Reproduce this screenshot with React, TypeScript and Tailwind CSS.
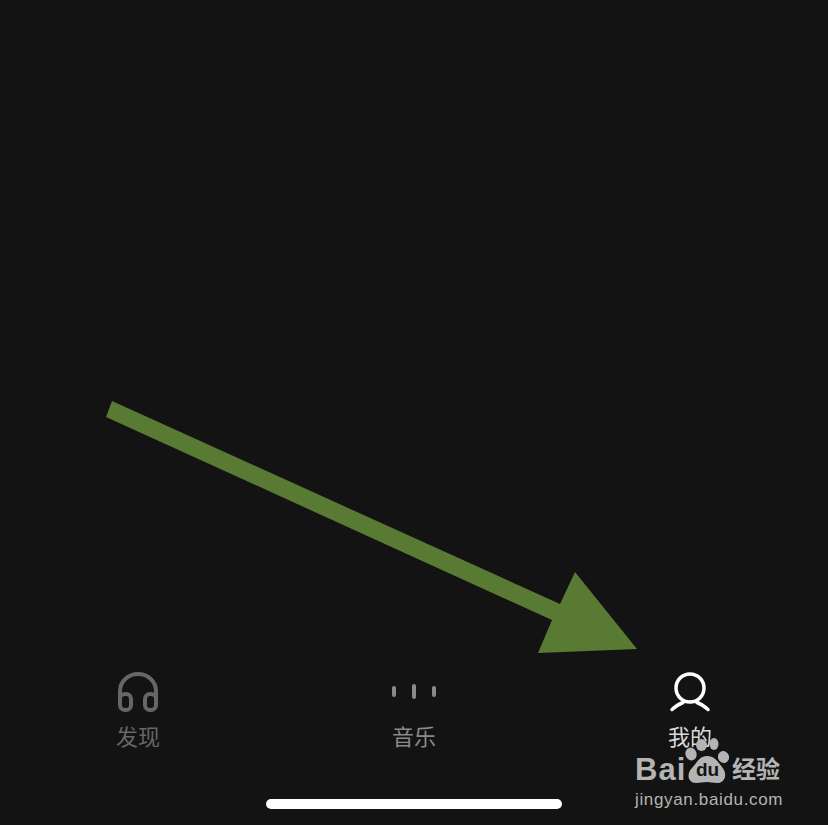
const cjk = { fontFamily: '"Noto Sans CJK SC", "Liberation Sans", sans-serif' };
const latin = { fontFamily: '"Liberation Sans", sans-serif' };

function Headphones() {
  return (
    <svg viewBox="0 0 42 40" className="h-10 w-[42px]" fill="none" stroke="#666666" strokeWidth="4">
      <path d="M3 28V19a18 17 0 0 1 36 0V28" />
      <rect x="3" y="22" width="11" height="16" rx="5" />
      <rect x="28" y="22" width="11" height="16" rx="5" />
    </svg>
  );
}

function Bars() {
  return (
    <div className="flex h-10 items-center gap-4 pb-0.5">
      <div className="h-[11px] w-1 rounded-full bg-[#8a8a8a]" />
      <div className="h-[15px] w-1 rounded-full bg-[#8a8a8a]" />
      <div className="h-[11px] w-1 rounded-full bg-[#8a8a8a]" />
    </div>
  );
}

function User() {
  return (
    <svg viewBox="0 0 42 40" className="h-10 w-[42px]" fill="none" stroke="#ffffff" strokeWidth="3.500" strokeLinecap="round">
      <circle cx="21" cy="16" r="14" />
      <path d="M3 37.500C6.500 34.500 10 32 14 30.500M39 37.500C35.500 34.500 32 32 28 30.500" />
    </svg>
  );
}

function Tab({ label, color, children }: { label: string; color: string; children: React.ReactNode }) {
  return (
    <div className="flex flex-col items-center">
      {children}
      <span className={`mt-2 text-[22px] leading-[30px] ${color}`} style={cjk}>
        {label}
      </span>
    </div>
  );
}

function Arrow() {
  return (
    <svg viewBox="0 0 828 825" className="pointer-events-none absolute inset-0 h-full w-full">
      <polygon points="112,401 560,604 575,572 637,649 538,653 552,620 106,417" fill="#587a33" />
    </svg>
  );
}

function Watermark() {
  return (
    <div className="absolute left-[635px] top-[738px] w-[150px] text-[#b4b4b4]">
      <div className="flex h-[46px] items-end">
        <span className="w-[50px] text-[31px] font-bold leading-[28px] tracking-[1px]" style={latin}>
          Bai
        </span>
        <div className="relative h-[46px] w-[44px]">
          <svg viewBox="0 0 44 46" className="absolute inset-0 h-full w-full" fill="#b4b4b4">
            <ellipse cx="6" cy="16" rx="5.500" ry="6.500" transform="rotate(-20 6 16)" />
            <ellipse cx="16.500" cy="7" rx="5.500" ry="6" />
            <ellipse cx="29" cy="6" rx="4.500" ry="6" />
            <ellipse cx="38.500" cy="19" rx="5.500" ry="6" transform="rotate(-20 38.500 19)" />
            <path d="M22 18C30 18 33 24 37 29C43 36 40 45 32 45C28 45 25 44 22 44C18 44 15 45 11 45C3 45 1 36 7 30C12 25 14 18 22 18Z" />
          </svg>
          <span className="absolute left-[11px] top-[22px] text-[19px] font-bold leading-5 text-[#141414]" style={latin}>
            du
          </span>
        </div>
        <span className="ml-[3px] whitespace-nowrap text-[24px] font-bold leading-8" style={cjk}>
          经验
        </span>
      </div>
      <div className="mt-[6px] whitespace-nowrap text-[17px] leading-5 tracking-[0.65px]" style={latin}>
        jingyan.baidu.com
      </div>
    </div>
  );
}

export default function App() {
  return (
    <div className="relative flex h-[825px] w-[828px] flex-col justify-end overflow-hidden bg-[#131313]">
      <div className="grid grid-cols-3">
        <Tab label="发现" color="text-[#666666]">
          <Headphones />
        </Tab>
        <Tab label="音乐" color="text-[#8a8a8a]">
          <Bars />
        </Tab>
        <Tab label="我的" color="text-[#d8d8d8]">
          <User />
        </Tab>
      </div>
      <div className="flex justify-center pb-4 pt-[49px]">
        <div className="h-[10px] w-[296px] rounded-full bg-white" />
      </div>
      <Arrow />
      <Watermark />
    </div>
  );
}
